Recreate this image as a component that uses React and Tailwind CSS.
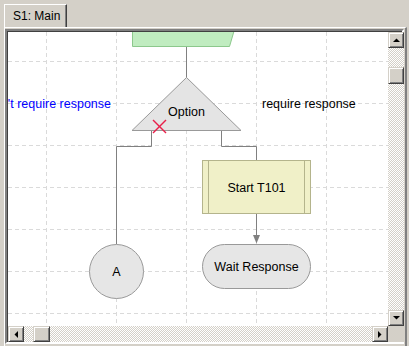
import React from "react";

const font = { fontFamily: "'Liberation Sans', Arial, sans-serif" };

const Arrow = ({ dir }) => {
  const pts = {
    up: "0,4 7,4 3.5,0.5",
    down: "0,0 7,0 3.5,3.5",
    left: "4,0 4,7 0.5,3.5",
    right: "0,0 0,7 3.5,3.5",
  }[dir];
  const w = dir === "up" || dir === "down" ? 7 : 4;
  const h = dir === "up" || dir === "down" ? 4 : 7;
  return (
    <svg width={w} height={h} viewBox={`0 0 ${w} ${h}`}>
      <polygon points={pts} fill="#000" />
    </svg>
  );
};

const Btn = ({ children, className = "" }) => (
  <div
    className={`flex items-center justify-center bg-[#d4d0c8] border border-t-[#d4d0c8] border-l-[#d4d0c8] border-r-[#404040] border-b-[#404040] shadow-[inset_1px_1px_#ffffff,inset_-1px_-1px_#808080] ${className}`}
  >
    {children}
  </div>
);

const track =
  "bg-[repeating-conic-gradient(#d4d0c8_0%_25%,#ffffff_0%_50%)] bg-size-[2px_2px]";

const Diagram = () => {
  const vx = [45, 115, 185, 255, 325];
  const hy = [60, 102, 144, 186, 228, 270, 312];
  return (
    <svg width="380" height="294" viewBox="7 31 380 294" className="block">
      <rect x="7" y="31" width="380" height="294" fill="#fff" />
      {vx.map((x) => (
        <line key={x} x1={x + 0.5} y1="31" x2={x + 0.5} y2="325" stroke="#dadada" strokeDasharray="4 3" />
      ))}
      {hy.map((y) => (
        <line key={y} x1="7" y1={y + 0.5} x2="387" y2={y + 0.5} stroke="#dadada" strokeDasharray="4 3" />
      ))}

      {/* connectors */}
      <g stroke="#808080" fill="none">
        <line x1="185.5" y1="45" x2="185.5" y2="77" />
        <polyline points="150.5,129 150.5,145.5 115.5,145.5 115.5,243" />
        <polyline points="220.5,129 220.5,145.5 255.5,145.5 255.5,159" />
        <line x1="255.5" y1="213" x2="255.5" y2="240" />
      </g>
      <polygon points="252,234 259,234 255.5,242.5" fill="#808080" />

      {/* start node */}
      <polygon points="131.5,25 234.5,25 228.5,45.5 131.5,45.5" fill="#c0ecc0" stroke="#8cc88c" />

      {/* decision */}
      <polygon points="185.5,76.5 131,129.5 240,129.5" fill="#e4e4e4" stroke="#999" />
      <g stroke="#e8204a" strokeWidth="1.4">
        <line x1="152" y1="119" x2="165" y2="132" />
        <line x1="165" y1="119" x2="152" y2="132" />
      </g>

      {/* connector A */}
      <circle cx="115.5" cy="270.5" r="27" fill="#e6e6e6" stroke="#999" />

      {/* task */}
      <rect x="201.5" y="159.5" width="108" height="53" fill="#f0f0c8" stroke="#b4b48c" />
      <line x1="207.5" y1="159.5" x2="207.5" y2="212.5" stroke="#b4b48c" />
      <line x1="303.5" y1="159.5" x2="303.5" y2="212.5" stroke="#b4b48c" />

      {/* wait */}
      <rect x="201.5" y="243.5" width="108" height="44" rx="22" fill="#e6e6e6" stroke="#999" />

      <g style={font} fontSize="12.5" dominantBaseline="central">
        <text x="185.5" y="111" textAnchor="middle" fill="#000">Option</text>
        <text x="110" y="103" textAnchor="end" fill="#0000ff">Don't require response</text>
        <text x="261" y="103" fill="#000">require response</text>
        <text x="115.5" y="271" textAnchor="middle" fill="#000">A</text>
        <text x="255.5" y="186.5" textAnchor="middle" fill="#000">Start T101</text>
        <text x="255.5" y="266" textAnchor="middle" fill="#000">Wait Response</text>
      </g>
    </svg>
  );
};

export default function App() {
  return (
    <div className="w-[409px] h-[346px] bg-[#d4d0c8] overflow-hidden relative" style={font}>
      {/* tab strip */}
      <div className="h-[27px] pl-[4px] pt-[4px] flex">
        <div className="w-[63px] h-[23px] border-t border-l border-white border-r border-r-[#404040] shadow-[inset_-1px_0_#808080] flex items-center pl-[8px] text-[12px] text-black">
          S1: Main
        </div>
      </div>

      {/* panel */}
      <div className="ml-[4px] w-[403px] h-[330px] border-t border-l border-white border-r-2 border-r-[#808080] pt-[1px]">
        <div className="w-[399px] border-t-2 border-l-2 border-t-[#808080] border-l-[#808080] border-r-2 border-b-2 border-r-white border-b-white shadow-[inset_1px_1px_#404040]">
          <div className="grid grid-cols-[380px_16px] grid-rows-[294px_16px] pl-px pt-px">
            <div className="overflow-hidden">
              <Diagram />
            </div>
            <div className={`flex flex-col ${track}`}>
              <Btn className="w-[16px] h-[16px]">
                <Arrow dir="up" />
              </Btn>
              <div className="h-[19px]" />
              <Btn className="w-[16px] h-[17px]" />
              <div className="flex-1" />
              <Btn className="w-[16px] h-[16px]">
                <Arrow dir="down" />
              </Btn>
            </div>
            <div className={`flex ${track}`}>
              <Btn className="w-[16px] h-[16px]">
                <Arrow dir="left" />
              </Btn>
              <div className="w-[9px]" />
              <Btn className="w-[17px] h-[16px]" />
              <div className="flex-1" />
              <Btn className="w-[16px] h-[16px]">
                <Arrow dir="right" />
              </Btn>
            </div>
            <div className="bg-[#d4d0c8]" />
          </div>
        </div>
      </div>
    </div>
  );
}
